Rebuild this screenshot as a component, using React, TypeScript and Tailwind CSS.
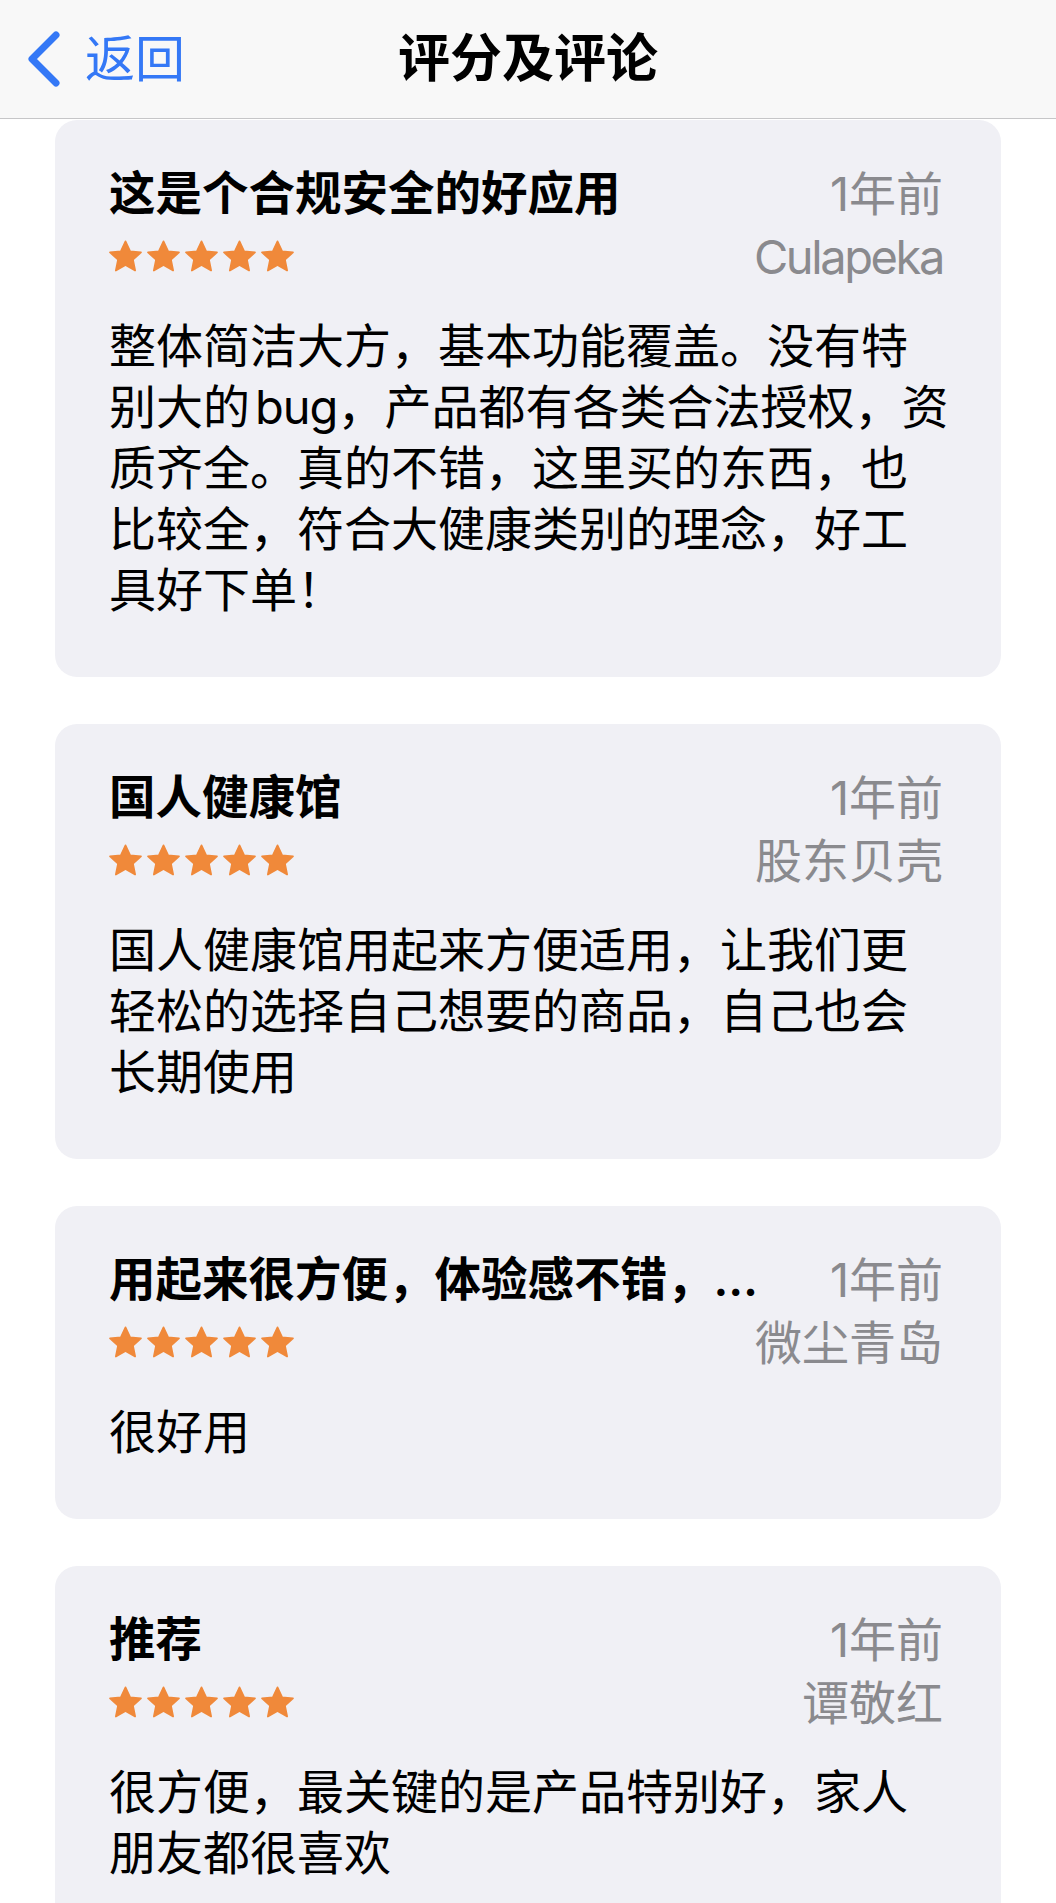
import type { ReactNode } from "react";

const reviews: {
  title: string;
  time: string;
  author: string;
  lines: ReactNode[];
}[] = [
  {
    title: "这是个合规安全的好应用",
    time: "1年前",
    author: "Culapeka",
    lines: [
      "整体简洁大方，基本功能覆盖。没有特",
      <>
        别大的<span className="ml-[5px] tracking-[-1px]">bug</span>，产品都有各类合法授权，资
      </>,
      "质齐全。真的不错，这里买的东西，也",
      "比较全，符合大健康类别的理念，好工",
      "具好下单！",
    ],
  },
  {
    title: "国人健康馆",
    time: "1年前",
    author: "股东贝壳",
    lines: [
      "国人健康馆用起来方便适用，让我们更",
      "轻松的选择自己想要的商品，自己也会",
      "长期使用",
    ],
  },
  {
    title: "用起来很方便，体验感不错，…",
    time: "1年前",
    author: "微尘青岛",
    lines: ["很好用"],
  },
  {
    title: "推荐",
    time: "1年前",
    author: "谭敬红",
    lines: ["很方便，最关键的是产品特别好，家人", "朋友都很喜欢"],
  },
];

function Star() {
  return (
    <svg viewBox="0 0 24 24" className="w-[35px] h-[35px]">
      <polygon
        points="12,1.6 15.2,8.4 22.6,9.2 17.1,14.2 18.6,21.6 12,17.8 5.4,21.6 6.9,14.2 1.4,9.2 8.8,8.4"
        fill="#f0893a"
        stroke="#f0893a"
        strokeWidth="1.2"
        strokeLinejoin="round"
      />
    </svg>
  );
}

function ReviewCard({ review }: { review: (typeof reviews)[number] }) {
  const latin = /^[\x00-\x7f]+$/.test(review.author);
  return (
    <div className="rounded-[22px] bg-[#f0f0f5] pl-[54px] pr-[58px] pt-[42px] pb-[57px]">

      {/* Title + meta */}

      <div className="flex justify-between gap-[24px]">
        <div className="min-w-0 flex-1">
          <div className="h-[63px] leading-[63px] text-[46.5px] font-semibold text-black whitespace-nowrap">
            {review.title}
          </div>
          <div className="h-[63px] flex items-center gap-[3px] -ml-[1px]">
            {[0, 1, 2, 3, 4].map((i) => (
              <Star key={i} />
            ))}
          </div>
        </div>
        <div className="text-right text-[47px] text-[#8a8a8e] whitespace-nowrap">
          <div className="h-[63px] leading-[63px]">{review.time}</div>
          <div className={latin ? "h-[63px] leading-[63px] tracking-[-2.4px]" : "h-[63px] leading-[63px]"}>
            {review.author}
          </div>
        </div>
      </div>

      {/* Body */}

      <div className="mt-[27px] text-[47px] leading-[61px] text-black">
        {review.lines.map((line, i) => (
          <div key={i} className="whitespace-nowrap">
            {line}
          </div>
        ))}
      </div>
    </div>
  );
}

export default function App() {
  return (
    <div className="w-full h-[1903px] overflow-hidden bg-white font-[Inter,'Noto_Sans_CJK_SC',sans-serif]">

      {/* Nav bar */}

      <header className="h-[119px] bg-[#f8f8f8] border-b border-[#c6c6c8] grid grid-cols-[1fr_auto_1fr] items-center">
        <div className="flex items-center pl-[25px] text-[#3478f6]">
          <svg viewBox="0 0 36 56" className="w-[36px] h-[56px]">
            <path
              d="M31 4 L7 28 L31 52"
              fill="none"
              stroke="currentColor"
              strokeWidth="7"
              strokeLinecap="round"
              strokeLinejoin="round"
            />
          </svg>
          <span className="ml-[24px] text-[50px] leading-none">返回</span>
        </div>
        <h1 className="text-[52px] font-bold text-black leading-none">评分及评论</h1>
        <div />
      </header>

      {/* Reviews */}

      <main className="px-[55px] pt-[1px] flex flex-col gap-[47px]">
        {reviews.map((r, i) => (
          <ReviewCard key={i} review={r} />
        ))}
      </main>
    </div>
  );
}
